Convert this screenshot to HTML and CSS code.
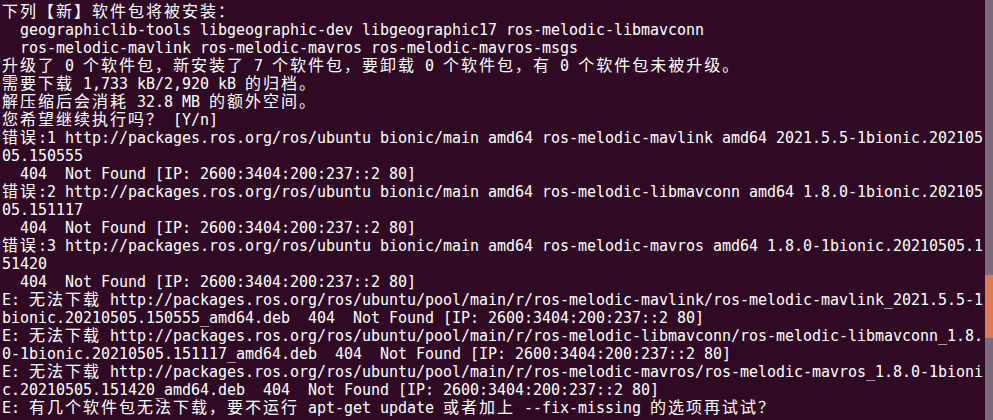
FILE: index.html
```html
<!DOCTYPE html>
<html>
<head>
<meta charset="utf-8">
<link rel="stylesheet" href="styles.css">
</head>
<body>
<div class="window">
<div class="term">
<div class="ln"><span class="z">下列【新】软件包将被安装：</span></div>
<div class="ln">  geographiclib-tools libgeographic-dev libgeographic17 ros-melodic-libmavconn</div>
<div class="ln">  ros-melodic-mavlink ros-melodic-mavros ros-melodic-mavros-msgs</div>
<div class="ln"><span class="z">升级了</span> 0 <span class="z">个软件包，新安装了</span> 7 <span class="z">个软件包，要卸载</span> 0 <span class="z">个软件包，有</span> 0 <span class="z">个软件包未被升级。</span></div>
<div class="ln"><span class="z">需要下载</span> 1,733 kB/2,920 kB <span class="z">的归档。</span></div>
<div class="ln"><span class="z">解压缩后会消耗</span> 32.8 MB <span class="z">的额外空间。</span></div>
<div class="ln"><span class="z">您希望继续执行吗？</span> [Y/n]</div>
<div class="ln"><span class="z">错误</span>:1 http://packages.ros.org/ros/ubuntu bionic/main amd64 ros-melodic-mavlink amd64 2021.5.5-1bionic.202105</div>
<div class="ln">05.150555</div>
<div class="ln">  404  Not Found [IP: 2600:3404:200:237::2 80]</div>
<div class="ln"><span class="z">错误</span>:2 http://packages.ros.org/ros/ubuntu bionic/main amd64 ros-melodic-libmavconn amd64 1.8.0-1bionic.202105</div>
<div class="ln">05.151117</div>
<div class="ln">  404  Not Found [IP: 2600:3404:200:237::2 80]</div>
<div class="ln"><span class="z">错误</span>:3 http://packages.ros.org/ros/ubuntu bionic/main amd64 ros-melodic-mavros amd64 1.8.0-1bionic.20210505.1</div>
<div class="ln">51420</div>
<div class="ln">  404  Not Found [IP: 2600:3404:200:237::2 80]</div>
<div class="ln">E: <span class="z">无法下载</span> http://packages.ros.org/ros/ubuntu/pool/main/r/ros-melodic-mavlink/ros-melodic-mavlink_2021.5.5-1</div>
<div class="ln">bionic.20210505.150555_amd64.deb  404  Not Found [IP: 2600:3404:200:237::2 80]</div>
<div class="ln">E: <span class="z">无法下载</span> http://packages.ros.org/ros/ubuntu/pool/main/r/ros-melodic-libmavconn/ros-melodic-libmavconn_1.8.</div>
<div class="ln">0-1bionic.20210505.151117_amd64.deb  404  Not Found [IP: 2600:3404:200:237::2 80]</div>
<div class="ln">E: <span class="z">无法下载</span> http://packages.ros.org/ros/ubuntu/pool/main/r/ros-melodic-mavros/ros-melodic-mavros_1.8.0-1bioni</div>
<div class="ln">c.20210505.151420_amd64.deb  404  Not Found [IP: 2600:3404:200:237::2 80]</div>
<div class="ln">E: <span class="z">有几个软件包无法下载，要不运行</span> apt-get update <span class="z">或者加上</span> --fix-missing <span class="z">的选项再试试？</span></div>
</div>
<div class="scroll"><div class="thumb"></div></div>
</div>
</body>
</html>
```

FILE: styles.css
```css
html, body {
  margin: 0;
  padding: 0;
  background: #300a24;
}
.window {
  display: flex;
  width: 993px;
  height: 420px;
  overflow: hidden;
  background: #300a24;
}
.term {
  flex: 1;
  padding: 3px 0 0 2px;
  color: #ffffff;
  font-family: "DejaVu Sans Mono", monospace;
  font-size: 15px;
  letter-spacing: -0.03px;
  line-height: 18px;
  overflow: hidden;
}
.ln {
  height: 18px;
  white-space: pre;
}
.z {
  font-family: "Noto Sans CJK SC", sans-serif;
  font-size: 16px;
  letter-spacing: 2px;
  line-height: 14px;
}
.scroll {
  width: 8px;
  flex: none;
  background: #7b6a79;
}
.thumb {
  margin-top: 275px;
  height: 63px;
  background: #dd7a52;
}
```
